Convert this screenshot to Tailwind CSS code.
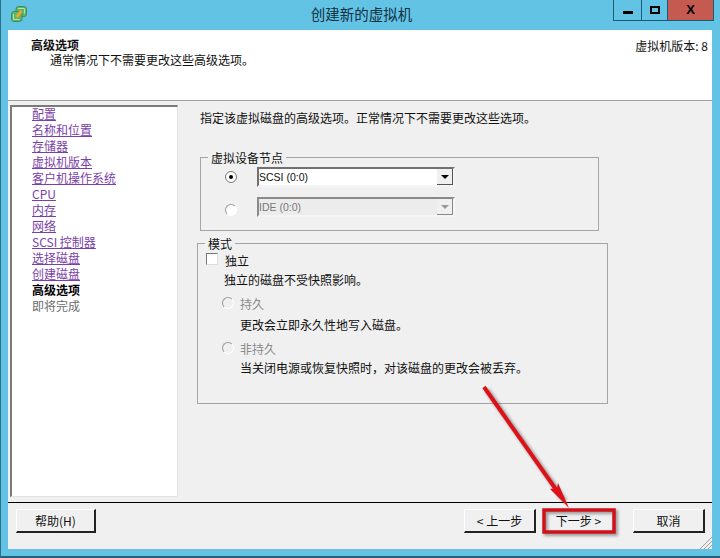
<!DOCTYPE html>
<html lang="zh-CN">
<head>
    <meta charset="UTF-8">
    <title>创建新的虚拟机</title>
    <script src="https://cdn.jsdelivr.net/npm/@tailwindcss/browser@4"></script>
</head>
<body class="m-0 overflow-hidden bg-[#62c3e5]">
<div class="relative w-[720px] h-[558px] flex flex-col text-[12px] leading-[16px] text-[#111] font-['Noto_Sans_CJK_SC','Liberation_Sans',sans-serif] border-l border-l-[#2a6f8c] border-b-2 border-b-[#2a5f78]">

    <!-- title bar -->
    <div class="h-[30px] flex shrink-0 relative">
        <svg class="w-[18px] h-[18px] ml-[9px] mt-[5px]" viewBox="0 0 18 18">
            <rect x="6" y="1.5" width="10.5" height="10" rx="2.5" fill="#5cb56c" stroke="#3f8f55"/>
            <rect x="1.5" y="6.5" width="10.5" height="10" rx="2.5" fill="#5cb56c" stroke="#3f8f55"/>
            <path d="M8 3.5h6.5v5M3.5 9v5.5h6" fill="none" stroke="#b9dfb6"/>
            <path d="M6.5 12L11.5 6" stroke="#e3a92a" stroke-width="3.2"/>
        </svg>
        <div class="flex-1 text-center text-[14.5px] leading-[28px] pl-[82px] text-[#12303d]">创建新的虚拟机</div>
        <div class="flex h-[21px] border border-t-0 border-[#1d5c78] mr-[6px] w-[101px] shrink-0">
            <div class="w-[28px] flex items-center justify-center border-r border-[#1d5c78]"><div class="w-[10px] h-[3px] mt-[4px] bg-black"></div></div>
            <div class="w-[26px] flex items-center justify-center border-r border-[#1d5c78]"><div class="w-[10px] h-[8px] border-2 border-black"></div></div>
            <div class="flex-1 flex items-center justify-center bg-[#c55a50] text-black font-bold text-[13px] leading-[16px] font-['Liberation_Sans',sans-serif]">X</div>
        </div>
    </div>

    <!-- client area -->
    <div class="w-[704px] ml-[7px] h-[519px] bg-[#f0f0f0] flex flex-col">
        <div class="h-[71px] shrink-0 bg-white border-b border-[#a0a0a0] flex justify-between pl-[23px] pr-[4px] pt-[7px]">
            <div>
                <div class="font-bold">高级选项</div>
                <div class="pl-[19px] -mt-[1px]">通常情况下不需要更改这些高级选项。</div>
            </div>
            <div class="mt-[1px]">虚拟机版本: 8</div>
        </div>

        <div class="flex-1 flex pt-[4px] pb-[5px] pl-[2px]">
            <!-- steps list -->
            <div class="w-[168px] h-[392px] shrink-0 bg-white border-l-2 border-t-2 border-[#7a7a7a] border-r border-r-[#e4e4e4] border-b border-b-[#e4e4e4] pl-[20px] flex flex-col items-start">
                <a class="underline text-[#7a3fa8] -mt-[1px]">配置</a>
                <a class="underline text-[#7a3fa8]">名称和位置</a>
                <a class="underline text-[#7a3fa8]">存储器</a>
                <a class="underline text-[#7a3fa8]">虚拟机版本</a>
                <a class="underline text-[#7a3fa8]">客户机操作系统</a>
                <a class="underline text-[#7a3fa8]">CPU</a>
                <a class="underline text-[#7a3fa8]">内存</a>
                <a class="underline text-[#7a3fa8]">网络</a>
                <a class="underline text-[#7a3fa8]">SCSI 控制器</a>
                <a class="underline text-[#7a3fa8]">选择磁盘</a>
                <a class="underline text-[#7a3fa8]">创建磁盘</a>
                <span class="font-bold text-black">高级选项</span>
                <span class="text-[#6d6d6d]">即将完成</span>
            </div>

            <!-- options -->
            <div class="flex-1 pl-[19px] pt-[5px]">
                <div class="pl-[3px]">指定该虚拟磁盘的高级选项。正常情况下不需要更改这些选项。</div>

                <fieldset class="mt-[31px] ml-[3px] w-[399px] h-[74px] border border-[#a5a5a5] m-0 p-0 relative">
                    <legend class="ml-[7px] px-[3px] leading-[14px] h-0 relative -top-[7px]">虚拟设备节点</legend>
                    <div class="flex items-center mt-[9px] ml-[24px]">
                        <span class="w-[12px] h-[12px] rounded-full border border-[#777] bg-white flex items-center justify-center"><span class="w-[4px] h-[4px] rounded-full bg-black"></span></span>
                        <div class="ml-[20px] w-[198px] h-[20px] bg-white border-2 border-[#707070] border-r-[#f5f5f5] border-b-[#f5f5f5] flex items-center justify-between font-['Liberation_Sans',sans-serif] text-[10.5px]">
                            <span>SCSI (0:0)</span>
                            <span class="w-[16px] h-[16px] bg-[#f0f0f0] border-r border-b border-[#555] flex items-center justify-center"><span class="w-0 h-0 border-x-[4px] border-x-transparent border-t-[4px] border-t-black"></span></span>
                        </div>
                    </div>
                    <div class="flex items-center mt-[10px] ml-[24px]">
                        <span class="w-[12px] h-[12px] mt-[5px] rounded-full border border-[#999] border-r-white border-b-white bg-white"></span>
                        <div class="ml-[20px] w-[198px] h-[20px] bg-[#ececec] border-2 border-[#8a8a8a] border-r-[#f5f5f5] border-b-[#f5f5f5] flex items-center justify-between text-[#777] font-['Liberation_Sans',sans-serif] text-[10.5px]">
                            <span>IDE (0:0)</span>
                            <span class="w-[16px] h-[16px] bg-[#f0f0f0] border-r border-b border-[#888] flex items-center justify-center"><span class="w-0 h-0 border-x-[4px] border-x-transparent border-t-[4px] border-t-[#999]"></span></span>
                        </div>
                    </div>
                </fieldset>

                <fieldset class="mt-[12px] w-[411px] h-[161px] border border-[#a5a5a5] m-0 p-0 relative">
                    <legend class="ml-[7px] px-[3px] leading-[14px] h-0 relative -top-[7px]">模式</legend>
                    <div class="flex items-center mt-[9px] ml-[8px]">
                        <span class="w-[12px] h-[12px] -mt-[5px] bg-white border border-[#777] border-r-[#ddd] border-b-[#ddd]"></span>
                        <span class="ml-[7px]">独立</span>
                    </div>
                    <div class="ml-[26px] mt-[3px]">独立的磁盘不受快照影响。</div>
                    <div class="flex items-center mt-[8px] ml-[24px] text-[#8a8a8a]">
                        <span class="w-[12px] h-[12px] -mt-[2px] rounded-full border border-[#999] border-r-white border-b-white"></span>
                        <span class="ml-[6px]">持久</span>
                    </div>
                    <div class="ml-[42px] mt-[5px]">更改会立即永久性地写入磁盘。</div>
                    <div class="flex items-center mt-[8px] ml-[24px] text-[#8a8a8a]">
                        <span class="w-[12px] h-[12px] -mt-[2px] rounded-full border border-[#999] border-r-white border-b-white"></span>
                        <span class="ml-[6px]">非持久</span>
                    </div>
                    <div class="ml-[42px] mt-[3px]">当关闭电源或恢复快照时，对该磁盘的更改会被丢弃。</div>
                </fieldset>
            </div>
        </div>

        <!-- footer buttons -->
        <div class="h-[47px] shrink-0 border-t border-black relative flex items-start pt-[6px] pl-[8px] pr-[7px]">
            <button class="w-[80px] h-[24px] bg-[#f0f0f0] border border-white border-r-2 border-b-2 border-r-[#222] border-b-[#222] text-center">帮助(H)</button>
            <div class="ml-auto flex">
                <button class="w-[72px] h-[24px] bg-[#f0f0f0] border border-white border-r-2 border-b-2 border-r-[#222] border-b-[#222]">&lt; 上一步</button>
                <button class="ml-[7px] w-[72px] h-[24px] bg-[#f0f0f0] border border-white border-r-2 border-b-2 border-r-[#222] border-b-[#222]">下一步 &gt;</button>
                <button class="ml-[18px] w-[72px] h-[24px] bg-[#f0f0f0] border border-white border-r-2 border-b-2 border-r-[#222] border-b-[#222]">取消</button>
            </div>
            <svg class="absolute right-0 bottom-0 w-[14px] h-[12px]" viewBox="0 0 14 12" stroke="#a0a0a0">
                <path d="M2 12L14 0M6 12l8-8M10 12l4-4"/>
            </svg>
        </div>
    </div>

    <!-- red annotation over the dialog -->
    <svg class="absolute -left-px top-0 w-[720px] h-[558px] pointer-events-none" viewBox="0 0 720 558">
        <path class="blur-[1.5px]" d="M484 387L562 498" stroke="#000" stroke-opacity=".35" stroke-width="5" transform="translate(3 3)"/>
        <path d="M484 387L562 498" stroke="#dd1218" stroke-width="4"/>
        <path d="M569 508L550 489L557 488L558 483Z" fill="#dd1218"/>
        <rect class="blur-[1.5px]" x="544" y="510" width="70" height="22" fill="none" stroke="#000" stroke-opacity=".35" stroke-width="4" transform="translate(2 2)"/>
        <rect x="544" y="510" width="70" height="22" fill="none" stroke="#cf1119" stroke-width="3.5"/>
    </svg>
</div>
</body>
</html>
